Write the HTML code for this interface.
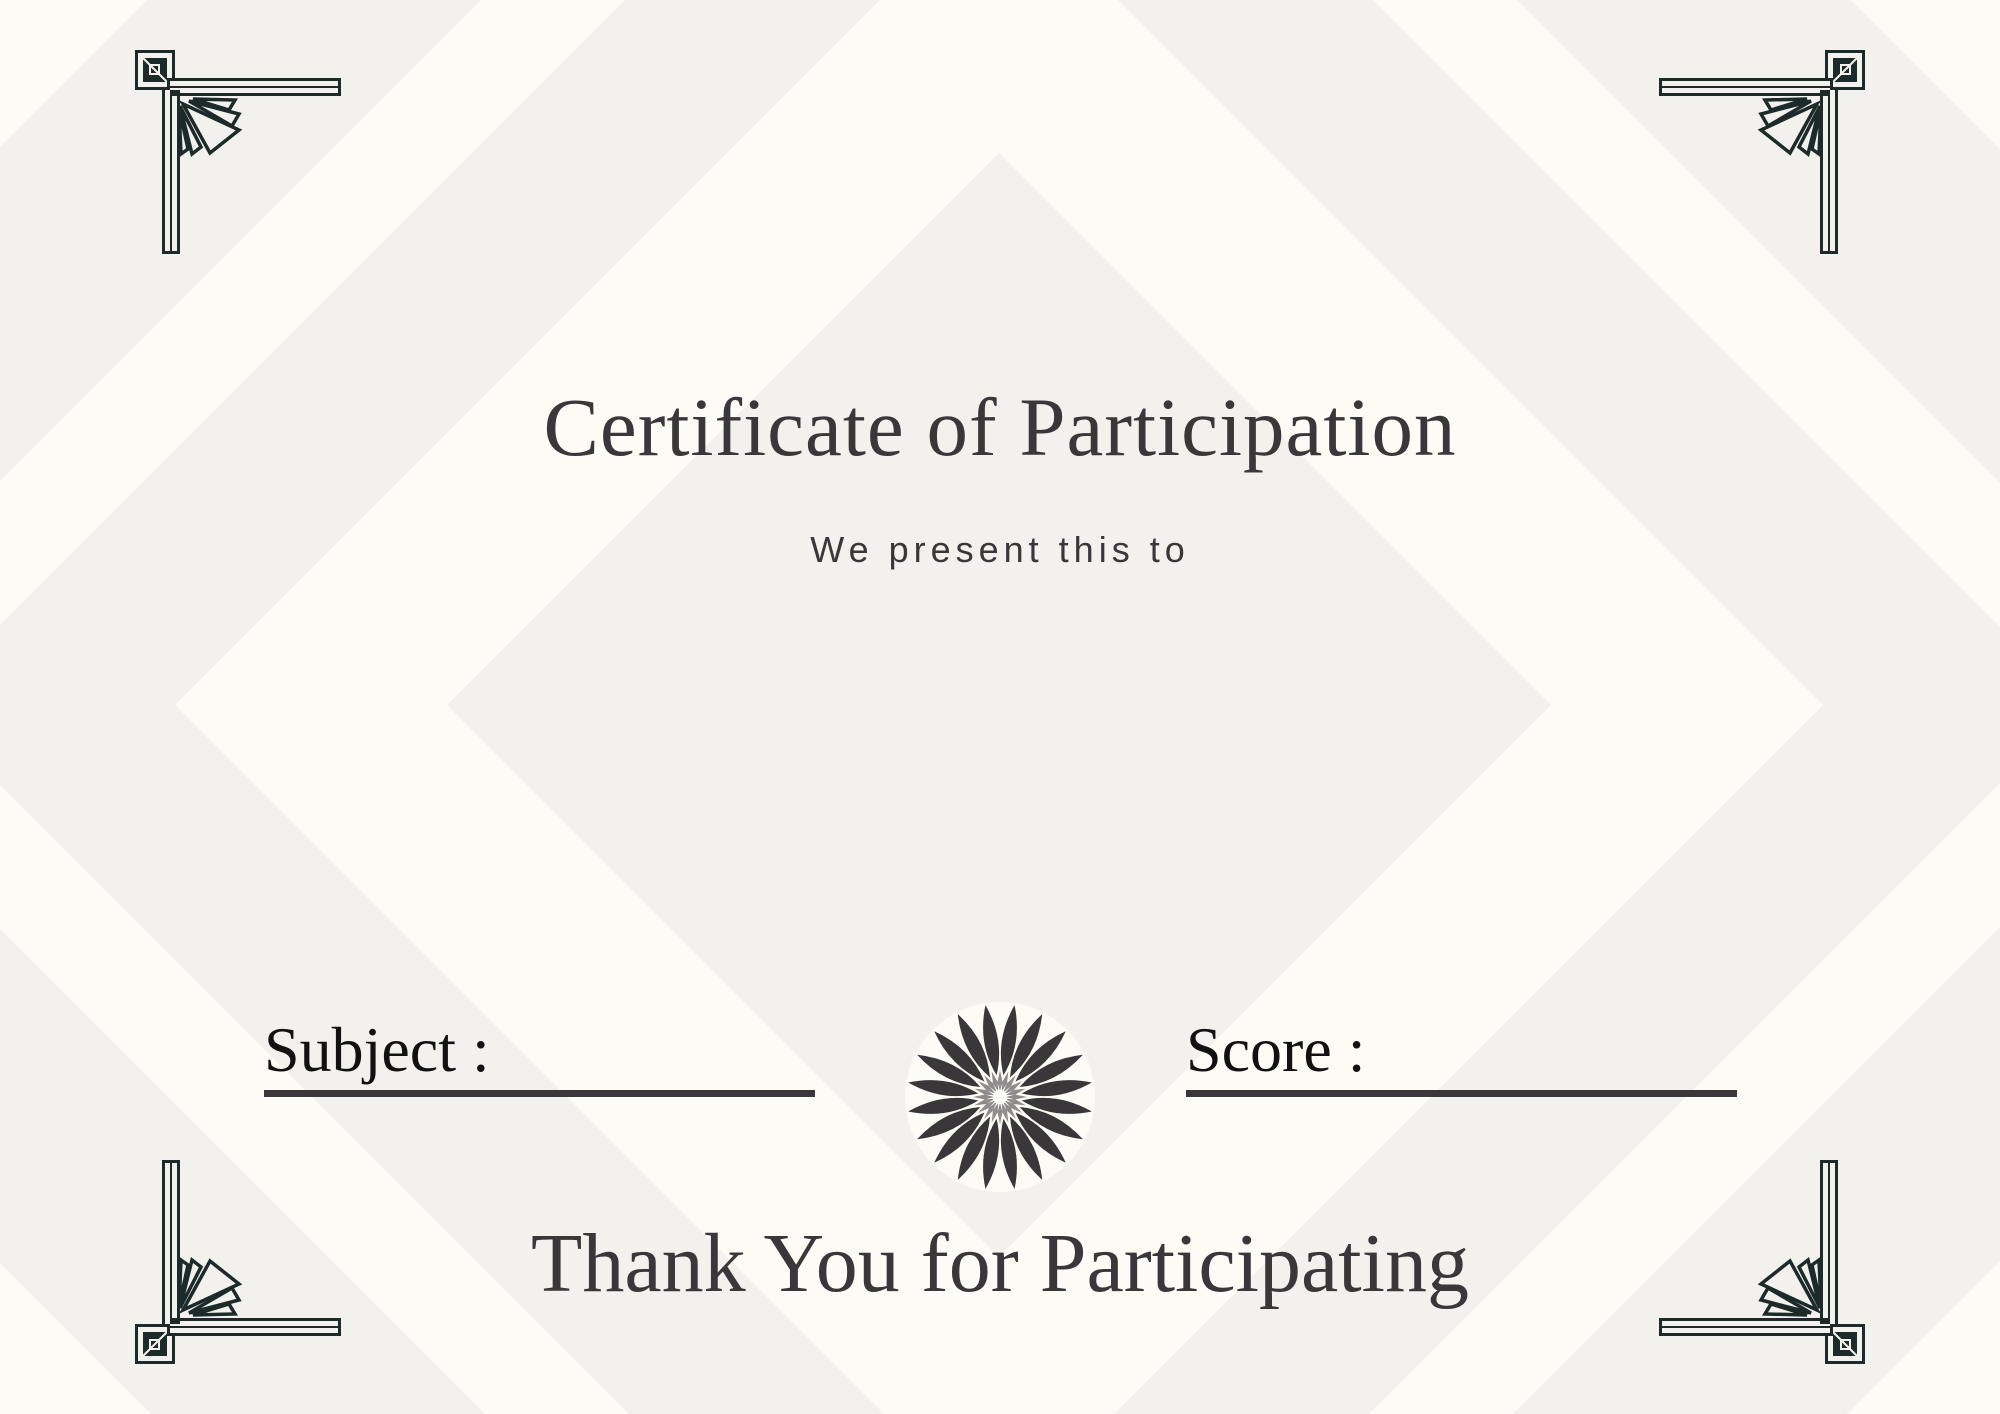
<!DOCTYPE html>
<html><head><meta charset="utf-8"><style>
html,body{margin:0;padding:0;width:2000px;height:1414px;overflow:hidden;}
body{position:relative;background:#fdfbf5;font-family:"Liberation Serif",serif;}
.bg{position:absolute;left:0;top:0;}
.t{position:absolute;white-space:nowrap;color:#3a3639;line-height:1;}
.c{position:absolute;}
.line{position:absolute;height:7px;background:#3a3639;}
</style></head><body>
<svg class="bg" width="2000" height="1414" viewBox="0 0 2000 1414">
<rect width="2000" height="1414" fill="#fdfbf5"/>
<g transform="translate(999,705)">
<polygon points="0,-1557 1557,0 0,1557 -1557,0" fill="#f3f1ee"/>
<polygon points="0,-1223 1223,0 0,1223 -1223,0" fill="#fdfbf5"/>
<polygon points="0,-1079 1079,0 0,1079 -1079,0" fill="#f3f1ee"/>
<polygon points="0,-824 824,0 0,824 -824,0" fill="#fdfbf5"/>
<polygon points="0,-552 552,0 0,552 -552,0" fill="#f3f1ee"/>
</g>
</svg>

<svg width="0" height="0" style="position:absolute;left:0;top:0">
<defs>
<g id="corner">
<rect x="0" y="0" width="40" height="40" fill="#1c2b29"/>
<rect x="3" y="3" width="34" height="34" fill="#f3f1ee"/>
<rect x="8" y="8" width="24" height="24" fill="#1c2b29"/>
<rect x="14" y="14" width="11" height="11" fill="#f3f1ee"/>
<rect x="16" y="16" width="7" height="7" fill="#1c2b29"/>
<line x1="6" y1="6" x2="34" y2="34" stroke="#f3f1ee" stroke-width="2"/>
<rect x="32" y="28" width="174" height="18" fill="#1c2b29"/>
<rect x="35" y="31" width="168" height="5" fill="#f3f1ee"/>
<rect x="35" y="38" width="168" height="5" fill="#f3f1ee"/>
<rect x="27" y="40" width="18" height="164" fill="#1c2b29"/>
<rect x="30" y="40" width="5" height="161" fill="#f3f1ee"/>
<rect x="37" y="46" width="5" height="155" fill="#f3f1ee"/>
<g fill="#f3f1ee" stroke="#1c2b29" stroke-width="3.5" stroke-linejoin="miter">
<path d="M58,49 L100,50 L94,60 Z"/>
<path d="M54,51 L104,64 L97,76 Z"/>
<path d="M48,54 L104,80 L75,103 Z"/>
<path d="M45,56 L66,97 L57,104 Z"/>
<path d="M44,58 L53,99 L46,104 Z"/>
</g>
</g>
<path id="petal" d="M0,-22 Q14,-56 0,-93 Q-14,-56 0,-22 Z"/>
<path id="spike" d="M0,-6 L2.5,-15 L0,-27 L-2.5,-15 Z"/>
</defs>
</svg>

<svg class="c" style="left:135px;top:50px" width="210" height="205"><use href="#corner"/></svg>
<svg class="c" style="left:1655px;top:50px" width="210" height="205"><g transform="translate(210,0) scale(-1,1)"><use href="#corner"/></g></svg>
<svg class="c" style="left:135px;top:1159px" width="210" height="205"><g transform="translate(0,205) scale(1,-1)"><use href="#corner"/></g></svg>
<svg class="c" style="left:1655px;top:1159px" width="210" height="205"><g transform="translate(210,205) scale(-1,-1)"><use href="#corner"/></g></svg>

<svg class="c" style="left:900px;top:997px" width="200" height="200" viewBox="-100 -100 200 200">
<circle r="95" fill="#fdfbf5"/>
<g fill="#3a3639">
<use href="#petal" transform="rotate(9)"/><use href="#petal" transform="rotate(27)"/><use href="#petal" transform="rotate(45)"/><use href="#petal" transform="rotate(63)"/><use href="#petal" transform="rotate(81)"/><use href="#petal" transform="rotate(99)"/><use href="#petal" transform="rotate(117)"/><use href="#petal" transform="rotate(135)"/><use href="#petal" transform="rotate(153)"/><use href="#petal" transform="rotate(171)"/><use href="#petal" transform="rotate(189)"/><use href="#petal" transform="rotate(207)"/><use href="#petal" transform="rotate(225)"/><use href="#petal" transform="rotate(243)"/><use href="#petal" transform="rotate(261)"/><use href="#petal" transform="rotate(279)"/><use href="#petal" transform="rotate(297)"/><use href="#petal" transform="rotate(315)"/><use href="#petal" transform="rotate(333)"/><use href="#petal" transform="rotate(351)"/>
</g>
<g fill="#8e8c8d">
<use href="#spike" transform="rotate(0)"/><use href="#spike" transform="rotate(18)"/><use href="#spike" transform="rotate(36)"/><use href="#spike" transform="rotate(54)"/><use href="#spike" transform="rotate(72)"/><use href="#spike" transform="rotate(90)"/><use href="#spike" transform="rotate(108)"/><use href="#spike" transform="rotate(126)"/><use href="#spike" transform="rotate(144)"/><use href="#spike" transform="rotate(162)"/><use href="#spike" transform="rotate(180)"/><use href="#spike" transform="rotate(198)"/><use href="#spike" transform="rotate(216)"/><use href="#spike" transform="rotate(234)"/><use href="#spike" transform="rotate(252)"/><use href="#spike" transform="rotate(270)"/><use href="#spike" transform="rotate(288)"/><use href="#spike" transform="rotate(306)"/><use href="#spike" transform="rotate(324)"/><use href="#spike" transform="rotate(342)"/>
</g>
<circle r="7" fill="#fdfbf5"/>
</svg>

<div class="t" style="left:0;width:2000px;text-align:center;top:386px;font-size:83px;letter-spacing:1px;">Certificate of Participation</div>
<div class="t" style="left:0;width:2000px;text-align:center;top:532px;font-size:36px;letter-spacing:5px;font-family:'Liberation Sans',sans-serif;color:#3a3639;">We present this to</div>

<div class="t" style="left:264px;top:1018px;font-size:64px;color:#111;">Subject :</div>
<div class="line" style="left:264px;top:1090px;width:551px;"></div>
<div class="t" style="left:1186px;top:1018px;font-size:64px;color:#111;">Score :</div>
<div class="line" style="left:1186px;top:1090px;width:551px;"></div>

<div class="t" style="left:0;width:2000px;text-align:center;top:1222px;font-size:84px;">Thank You for Participating</div>
</body></html>
